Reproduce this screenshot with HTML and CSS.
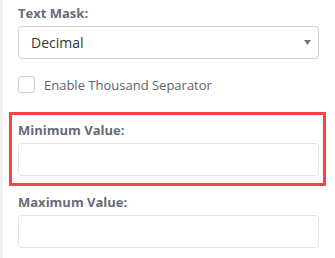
FILE: index.html
```html
<!DOCTYPE html>
<html lang="en">
<head>
  <meta charset="UTF-8" />
  <title>Field Settings</title>
  <link rel="stylesheet" href="styles.css">
</head>
<body>
  <div class="panel">
    <div class="field">
      <label class="label" for="mask">Text Mask:</label>
      <div class="select-wrap">
        <select id="mask" class="control">
          <option>Decimal</option>
          <option>Integer</option>
          <option>Currency</option>
        </select>
        <svg class="caret" width="7" height="5" viewBox="0 0 7 5"><path d="M0 0h7L3.5 5z" fill="#7a7a7a"/></svg>
      </div>
    </div>

    <label class="check">
      <input type="checkbox" />
      <span class="box"></span>
      Enable Thousand Separator
    </label>

    <div class="field highlight">
      <label class="label" for="minVal">Minimum Value:</label>
      <input id="minVal" class="control" type="text" />
    </div>

    <div class="field">
      <label class="label" for="maxVal">Maximum Value:</label>
      <input id="maxVal" class="control" type="text" />
    </div>
  </div>
</body>
</html>
```

FILE: styles.css
```css
* {
  box-sizing: border-box;
}
body {
  margin: 0;
  background: #fff;
  font-family: 'Open Sans', 'Liberation Sans', sans-serif;
}
.panel {
  border-left: 3px solid #eef0f4;
  min-height: 258px;
  padding: 4px 16px 0 15px;
}
.field {
  display: flex;
  flex-direction: column;
  gap: 4px;
}
.label {
  font-size: 13px;
  line-height: 18px;
  font-weight: bold;
  color: #676b77;
}
.control {
  width: 100%;
  height: 33px;
  border: 1px solid #dcdcdc;
  border-radius: 4px;
  background: #fff;
  font-family: inherit;
  font-size: 14px;
  color: #333;
  padding: 0 12px;
  outline: none;
}
select.control {
  appearance: none;
  -webkit-appearance: none;
  border-color: #cfcfcf;
}
.select-wrap {
  position: relative;
}
.caret {
  position: absolute;
  right: 8px;
  top: 14px;
  pointer-events: none;
}
.check {
  display: flex;
  align-items: center;
  gap: 9px;
  margin-top: 17px;
  height: 17px;
  font-size: 13px;
  color: #5f636d;
  cursor: pointer;
}
.check input {
  display: none;
}
.check .box {
  width: 17px;
  height: 17px;
  border: 1px solid #cdcdcd;
  border-radius: 3px;
  background: #fff;
}
.highlight {
  margin: 19px -7px 0 -9px;
  border: 3px solid #f44447;
  padding: 6px 4px 7px 6px;
}
.highlight + .field {
  margin-top: 7px;
}
.highlight .control,
.highlight + .field .control {
  border-color: #e2e2e2;
}
```
